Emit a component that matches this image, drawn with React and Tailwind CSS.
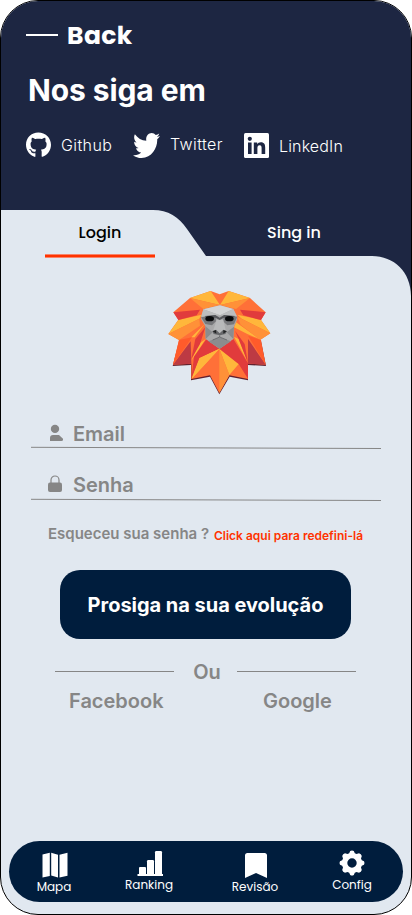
import { FaGithub } from "react-icons/fa";

const geo = "font-['Poppins','Inter',sans-serif]";

function Lion() {
  return (
    <svg viewBox="0 0 360 348" className="w-[120px] h-[116px]">
      <path fill="#62202f" d="M38 246L93 243L93 289L150 278L178 331L209 278L264 289L264 243L318 246L303 172L58 172Z" />
      <path fill="#ff7038" d="M152 21L179 31L206 21L270 42L317 85L303 108L331 148L300 168L317 242L264 239L264 285L208 274L178 327L150 274L94 285L94 239L39 242L57 168L25 150L55 107L40 85L90 42Z" />
      <g fill="#ffb73b">
        <path d="M152 21L180 63L90 42ZM206 21L270 42L180 63Z" />
        <path d="M125 92L118 104L25 150L55 108ZM245 104L331 148L303 108L232 92Z" />
        <path d="M178 194L95 284L118 222ZM178 194L208 273L236 240Z" />
        <path d="M134 120L104 160L94 160ZM222 130L228 115L300 166L262 150Z" />
        <path d="M222 158L264 236L236 165Z" />
        <path d="M137 165L94 230L116 180Z" />
      </g>
      <g fill="#ff9138">
        <path d="M90 42L180 63L130 75ZM270 42L180 63L228 75Z" />
        <path d="M25 150L118 104L120 125L57 168ZM331 148L232 98L242 122L300 168Z" />
        <path d="M178 194L178 326L208 273Z" />
      </g>
      <g fill="#e13b3c">
        <path d="M40 85L120 77L110 94L55 108ZM317 85L240 77L250 94L303 108Z" />
        <path d="M139 166L178 194L118 222L94 284L102 218ZM220 165L264 238L264 284L236 240L178 194Z" />
        <path d="M136 130L106 165L94 225L120 180ZM225 140L254 180L264 238L236 165Z" />
      </g>
      <path fill="#bd3a43" d="M264 165L317 242L264 239ZM92 172L94 239L39 242Z" />
      <path fill="#ff5b2b" d="M57 168L96 160L39 242ZM264 155L303 168L317 242Z" />
      <path fill="#ffb73b" d="M178 194L95 284L120 222Z" />
      <path fill="#a9a9aa" d="M180 64L220 75L232 105L222 128L220 165L179 194L137 165L136 127L123 105L130 76Z" />
      <path fill="#d3d4d5" d="M180 64L220 75L180 94L130 76Z" />
      <path fill="#bcbdbe" d="M130 76L180 94L123 98ZM220 75L180 94L232 98Z" />
      <path fill="#8b8c8e" d="M136 127L158 145L137 165ZM222 128L200 145L220 165ZM145 172L179 160L213 172L179 194Z" />
      <path fill="#77787b" d="M123 100L166 94L168 112L156 124L136 120ZM192 94L232 98L222 121L202 124L189 112Z" />
      <path fill="#55565a" d="M134 96L166 93L179 101L192 93L226 96L216 101L192 101L179 108L166 101L140 101Z" />
      <ellipse cx="149" cy="104" rx="13" ry="8" fill="#08090b" />
      <ellipse cx="208" cy="104" rx="13" ry="8" fill="#08090b" />
      <path fill="#b8b9ba" d="M170 108L190 108L197 138L179 150L160 138Z" />
      <path fill="#66676a" d="M157 142L168 137L179 148L190 137L201 142L196 150L180 154L161 150Z" />
      <path fill="#222324" d="M158 142L168 138L169 149ZM190 138L200 142L190 149Z" />
      <path fill="none" stroke="#58595c" strokeWidth="2" d="M179 154V159L158 168M179 159L201 168" />
    </svg>
  );
}

function Field({ label, lineClass, children }) {
  return (
    <div className="h-[51px] w-[350px] relative">
      <div className="flex items-center h-[36px] pl-[16px]">
        <span className="w-[26px] flex">{children}</span>
        <span className="text-[20px] leading-6 font-semibold text-[#868686]">{label}</span>
      </div>
      <svg className={`absolute left-0 w-[350px] h-[4px] ${lineClass}`} viewBox="0 0 350 4">
        <path d="M0 1.3L350 2.5" stroke="#868686" />
      </svg>
    </div>
  );
}

export default function App() {
  return (
    <div className="w-[412px] h-[915px] bg-white overflow-hidden font-['Inter',sans-serif]">
      <div className="w-full h-full rounded-[38px] border border-black bg-[#e1e8f0] overflow-hidden flex flex-col">
        <header className="relative h-[295px] shrink-0 text-white">
          <svg className="absolute inset-0 w-[410px] h-[295px]" viewBox="1 1 410 295">
            <path fill="#1d2642" d="M0 0H412V296H411C411 272 394 256 372 256H206L187 229C179 217 168 210 153 210H0Z" />
          </svg>
          <div className="relative flex flex-col h-full">
            <div className="flex items-center h-[36px] mt-[16px] pl-[25px]">
              <span className="w-8 h-0.5 bg-white" />
              <span className={`${geo} ml-[9px] mt-px text-[25px] font-bold leading-9 tracking-[0.4px]`}>Back</span>
            </div>
            <h1 className="mt-[19px] pl-[27px] text-[30px] leading-9 font-bold tracking-[-0.1px]">Nos siga em</h1>
            <div className="flex mt-[24px] pl-[25px] h-[26px] text-[16px] leading-[26px] font-light tracking-[0.4px]">
              <FaGithub className="w-[25px] h-[26px]" />
              <span className="ml-[10px] w-[72px]">Github</span>
              <svg className="w-[27px] h-[25px] mt-px" viewBox="0 48 512 416" preserveAspectRatio="none" fill="#fff">
                <path d="M459.37 151.716c.325 4.548.325 9.097.325 13.645 0 138.72-105.583 298.558-298.558 298.558-59.452 0-114.68-17.219-161.137-47.106 8.447.974 16.568 1.299 25.34 1.299 49.055 0 94.213-16.568 130.274-44.832-46.132-.975-84.792-31.188-98.112-72.772 6.498.974 12.995 1.624 19.818 1.624 9.421 0 18.843-1.3 27.614-3.573-48.081-9.747-84.143-51.98-84.143-102.985v-1.299c13.969 7.797 30.214 12.67 47.431 13.319-28.264-18.843-46.781-51.005-46.781-87.391 0-19.492 5.197-37.36 14.294-52.954 51.655 63.675 129.3 105.258 216.365 109.807-1.624-7.797-2.599-15.918-2.599-24.04 0-57.828 46.782-104.934 104.934-104.934 30.213 0 57.502 12.67 76.67 33.137 23.715-4.548 46.456-13.32 66.599-25.34-7.798 24.366-24.366 44.833-46.132 57.827 21.117-2.273 41.584-8.122 60.426-16.243-14.292 20.791-32.161 39.308-52.628 54.253z" />
              </svg>
              <span className="ml-[10px] w-[74px] -mt-px">Twitter</span>
              <svg className="w-[25px] h-[25px] mt-px" viewBox="0 0 25 25">
                <rect width="25" height="25" rx="1.5" fill="#fff" />
                <path fill="#1d2642" d="M4 9.5h3.6V21H4zM9.8 9.5h3.4v1.6c.6-1.1 1.9-1.9 3.6-1.9 3.6 0 4.4 2.3 4.4 5.5V21h-3.6v-5.6c0-1.5-.1-3.1-2-3.1s-2.2 1.5-2.2 3V21H9.8z" />
                <circle cx="5.8" cy="5.8" r="2.1" fill="#1d2642" />
              </svg>
              <span className="ml-[10px] mt-px tracking-[0.15px]">LinkedIn</span>
            </div>
            <nav className={`${geo} flex mt-[63px] text-[16px] leading-6 font-medium`}>
              <div className="ml-[44px] w-[110px] text-center text-black">
                <div>Login</div>
                <div className="mt-[9px] h-1 bg-[#ff3300] border-y border-[#f7836a]" />
              </div>
              <div className="ml-[84px] w-[110px] text-center">Sing in</div>
            </nav>
          </div>
        </header>

        <main className="flex flex-col -mt-[12px]">
          <div className="h-[116px] w-full pl-[159px]"><Lion /></div>
          <div className="mt-[16px] w-full pl-[30px]">
            <Field label="Email" lineClass="top-[30px]">
              <svg viewBox="0 0 15 18" className="w-[15px] h-[18px] ml-[2px] -mt-[2px]" fill="#868686">
                <circle cx="6" cy="4.9" r="4.2" />
                <path d="M1 17V14Q1 11 4 11H10L14 14.8V15.5Q14 17 12.5 17Z" />
              </svg>
            </Field>
            <Field label="Senha" lineClass="top-[31px]">
              <svg viewBox="0 0 16 18" className="w-4 h-[18px] -mt-[2px]" fill="#868686">
                <rect x="1" y="7.6" width="14" height="9.4" rx="2" />
                <path d="M4 9V5a4 4 0 0 1 8 0V9" fill="none" stroke="#868686" strokeWidth="1.2" />
              </svg>
            </Field>
          </div>
          <div className="flex w-full pl-[47px] h-[24px] mt-[6px] font-semibold whitespace-nowrap">
            <span className="w-[166px] text-[15px] leading-5 text-[#868686]">Esqueceu sua senha ?</span>
            <span className="text-[12px] leading-6 text-[#ff3300]">Click aqui para redefini-lá</span>
          </div>
          <button className="ml-[59px] mt-[22px] w-[291px] h-[69px] rounded-[20px] bg-[#001d3d] text-white text-[20px] leading-6 font-bold tracking-[-0.03px] whitespace-nowrap">Prosiga na sua evolução</button>
          <div className="flex items-center ml-[54px] w-[302px] mt-[21px] h-6 text-[#868686] text-[20px] leading-6 font-semibold">
            <span className="w-[119px] h-px -mt-px bg-[#868686]" />
            <span className="w-[63px] pl-[3px] text-center">Ou</span>
            <span className="w-[119px] h-px -mt-px bg-[#868686]" />
          </div>
          <div className="flex w-full mt-[5px] h-6 text-[#868686] text-[20px] leading-6 font-semibold">
            <span className="ml-[68px] w-[194px]">Facebook</span>
            <span>Google</span>
          </div>
        </main>

        <footer className={`${geo} mt-auto mb-[12px] ml-[8px] w-[394px] h-[61px] shrink-0 rounded-full bg-[#001d3d] text-white text-[12px] leading-[18px] flex`}>
          <div className="ml-[26px] mt-[11px] w-10 flex flex-col items-center">
            <svg className="w-[26px] h-[26px]" viewBox="0 0 26 26" fill="#fff">
              <path d="M.5 2.5L7.8 .8V24L.5 25.5ZM9.2 .8L16 2.7V25.4L9.2 23.5ZM17.5 2.7L25.5 .8V23.7L17.5 25.4Z" />
            </svg>
            <span className="mr-[2px]">Mapa</span>
          </div>
          <div className="ml-[50px] mt-[9px] w-[50px] flex flex-col items-center">
            <svg className="w-[26px] h-[26px] mr-px" viewBox="0 0 26 26" fill="#fff">
              <path d="M.5 24H26V26H.5Z" />
              <rect x="2" y="17" width="7" height="8" rx="1" />
              <rect x="10" y="10" width="7" height="15" rx="1.2" />
              <rect x="18" y="1" width="7" height="24" rx="1.2" />
            </svg>
            <span className="mr-[2px]">Ranking</span>
          </div>
          <div className="ml-[56px] mt-[11px] w-[50px] flex flex-col items-center">
            <svg className="w-[24px] h-[26px]" viewBox="0 0 24 26" fill="#fff">
              <path d="M1 3.5Q1 1 3.5 1H20.5Q23 1 23 3.5V26L12 21L1 26Z" />
            </svg>
            <span className="mr-[2px]">Revisão</span>
          </div>
          <div className="ml-[46px] mt-[9px] w-[50px] flex flex-col items-center">
            <svg className="w-[26px] h-[26px] mr-px" viewBox="0 0 26 26" fill="#fff">
              <path fillRule="evenodd" d="M11.2 1Q13 0 14.8 1L15.8 3.2L17.5 4L20 3.2Q22.2 3.8 22.8 6L22 8.5L22.8 10.2L25 11.2Q26 13 25 14.8L22.8 15.8L22 17.5L22.8 20Q22.2 22.2 20 22.8L17.5 22L15.8 22.8L14.8 25Q13 26 11.2 25L10.2 22.8L8.5 22L6 22.8Q3.8 22.2 3.2 20L4 17.5L3.2 15.8L1 14.8Q0 13 1 11.2L3.2 10.2L4 8.5L3.2 6Q3.8 3.8 6 3.2L8.5 4L10.2 3.2ZM13 8.3A4.7 4.7 0 1 0 13 17.7A4.7 4.7 0 1 0 13 8.3Z" />
            </svg>
            <span>Config</span>
          </div>
        </footer>
      </div>
    </div>
  );
}
